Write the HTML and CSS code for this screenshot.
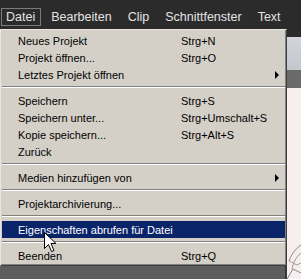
FILE: index.html
```html
<!DOCTYPE html>
<html lang="de">
<head>
    <meta charset="UTF-8">
    <title>Datei-Menü</title>
    <link rel="stylesheet" href="styles.css">
</head>
<body>
    <nav class="menubar">
        <span class="menubar-item active">Datei</span>
        <span class="menubar-item">Bearbeiten</span>
        <span class="menubar-item">Clip</span>
        <span class="menubar-item">Schnittfenster</span>
        <span class="menubar-item">Text</span>
    </nav>

    <div class="workspace">
        <div class="workspace-main"></div>
        <div class="side-panel">
            <div class="panel-head"></div>
            <div class="panel-tabs"></div>
            <div class="panel-body">
                <svg class="sketch" width="14" height="40" viewBox="0 0 14 40">
                    <path d="M14 6 C8 10 4 16 2 22" stroke="#8a8484" fill="none"/>
                    <path d="M14 14 C9 18 6 24 5 30" stroke="#9a9494" fill="none"/>
                    <path d="M2 22 L10 26 L14 24" stroke="#a09a9a" fill="none"/>
                    <path d="M0 40 L6 30 L14 34" stroke="#8a8484" fill="none"/>
                </svg>
            </div>
        </div>
    </div>

    <ul class="dropdown">
        <li class="entry"><span>Neues Projekt</span><span>Strg+N</span></li>
        <li class="entry"><span>Projekt öffnen...</span><span>Strg+O</span></li>
        <li class="entry"><span>Letztes Projekt öffnen</span><span></span><span class="arrow"></span></li>
        <li class="divider"></li>
        <li class="entry"><span>Speichern</span><span>Strg+S</span></li>
        <li class="entry"><span>Speichern unter...</span><span>Strg+Umschalt+S</span></li>
        <li class="entry"><span>Kopie speichern...</span><span>Strg+Alt+S</span></li>
        <li class="entry"><span>Zurück</span><span></span></li>
        <li class="divider"></li>
        <li class="entry"><span>Medien hinzufügen von</span><span></span><span class="arrow"></span></li>
        <li class="divider"></li>
        <li class="entry"><span>Projektarchivierung...</span><span></span></li>
        <li class="divider"></li>
        <li class="entry selected"><span>Eigenschaften abrufen für Datei</span><span></span></li>
        <li class="divider"></li>
        <li class="entry"><span>Beenden</span><span>Strg+Q</span></li>
    </ul>

    <svg class="cursor" width="13" height="21" viewBox="0 0 13 21">
        <path d="M0.5 0.5 L0.5 16.5 L4.5 12.5 L7.5 19.5 L10 18.5 L7 11.5 L12 11.5 Z" fill="#fff" stroke="#000" stroke-width="1"/>
    </svg>
</body>
</html>
```

FILE: styles.css
```css
body {
    margin: 0;
    width: 301px;
    height: 279px;
    overflow: hidden;
    background: #2b2b2b;
    font-family: "Liberation Sans", Arial, sans-serif;
}

.menubar {
    display: flex;
    height: 29px;
    padding: 8px 0 0 1px;
    box-sizing: border-box;
    background: #2b2b2b;
}
.menubar-item {
    height: 16px;
    line-height: 16px;
    padding: 0 5px 0 4px;
    margin-right: 5px;
    border: 1px solid transparent;
    color: #e4e4e4;
    font-size: 12.5px;
    white-space: nowrap;
}
.menubar-item.active {
    border-color: #7c7c7c;
}

.workspace {
    display: flex;
    height: 250px;
}
.workspace-main {
    width: 286px;
    background-color: #5c5c5c;
    background-image: repeating-conic-gradient(#595959 0 25%, #626262 0 50%);
    background-size: 2px 2px;
    border-right: 1px solid #333;
}
.side-panel {
    flex: 1;
    display: flex;
    flex-direction: column;
    border-left: 1px solid #3a3a3a;
}
.panel-head {
    height: 8px;
    background: #2b2b2b;
}
.panel-tabs {
    height: 33px;
    background: linear-gradient(#d2d5da, #c3c7cd);
    border-bottom: 18px solid #6a6a6a;
}
.panel-body {
    flex: 1;
    display: flex;
    align-items: flex-end;
    background: #f7efef;
}

.dropdown {
    position: absolute;
    left: 0;
    top: 29px;
    width: 283px;
    margin: 0;
    padding: 2px 1px 1px;
    list-style: none;
    background: #d4d0c8;
    border: 1px solid;
    border-color: #e8e6e0 #404040 #404040 #e8e6e0;
    box-shadow: inset -1px -1px 0 #808080;
    font-size: 11px;
    color: #000;
}
.entry {
    display: grid;
    grid-template-columns: 163px 1fr 10px;
    align-items: center;
    height: 17px;
    padding-left: 16px;
}
.entry.selected {
    background: #0a246a;
    color: #fff;
}
.arrow {
    width: 0;
    height: 0;
    border-top: 4px solid transparent;
    border-bottom: 4px solid transparent;
    border-left: 4px solid #000;
}
.divider {
    height: 9px;
    background: linear-gradient(transparent 3px, #808080 3px, #808080 4px, #fff 4px, #fff 5px, transparent 5px);
}

.cursor {
    position: absolute;
    left: 44px;
    top: 232px;
}
```
